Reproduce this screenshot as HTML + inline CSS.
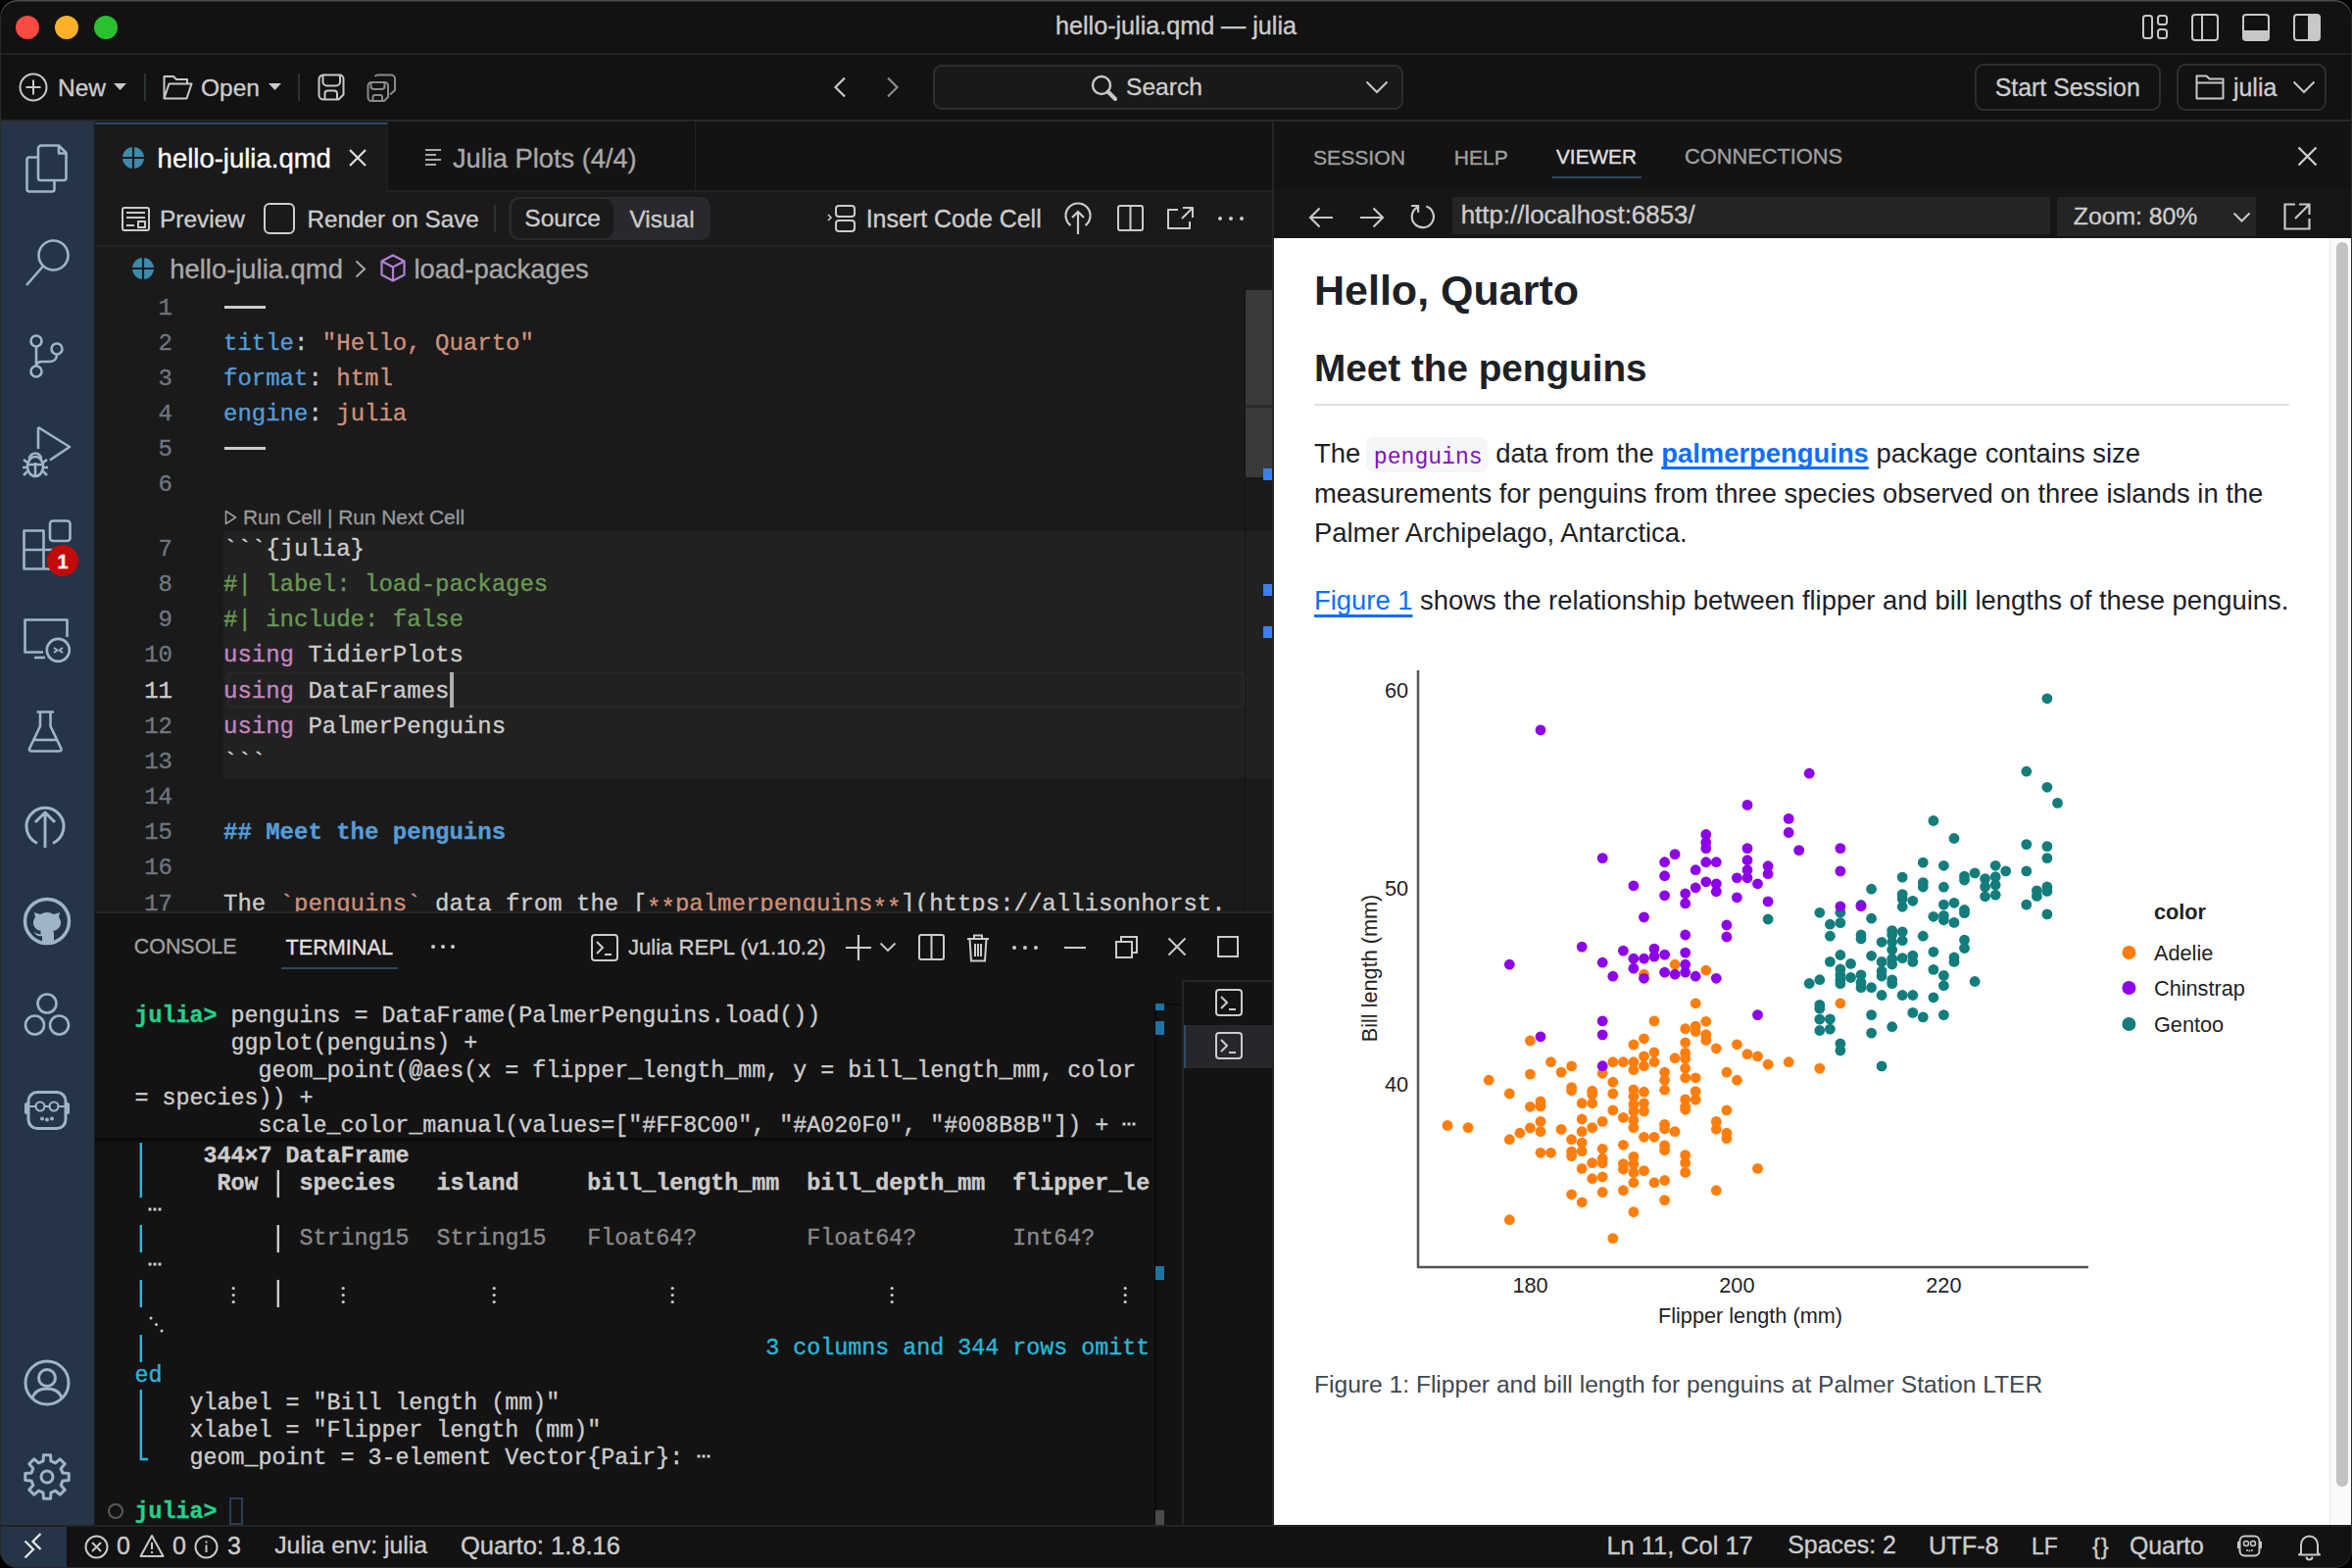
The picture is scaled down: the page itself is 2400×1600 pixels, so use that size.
<!DOCTYPE html>
<html><head><meta charset="utf-8">
<style>
*{margin:0;padding:0;box-sizing:border-box}
html,body{width:2400px;height:1600px;overflow:hidden;background:#000}
body{font-family:"Liberation Sans",sans-serif;color:#cccccc;position:relative}
.a{position:absolute}
svg{position:absolute;overflow:visible}
#win{position:absolute;left:0;top:0;width:2400px;height:1600px;background:#121212;border-radius:18px;overflow:hidden}
.t{position:absolute;white-space:pre;line-height:1;-webkit-text-stroke:0.35px currentColor}
.mono{font-family:"Liberation Mono",monospace}
.doc .t{-webkit-text-stroke:0}
</style></head>
<body>
<div id="win">
<div class="a" style="left:0px;top:0px;width:2400px;height:54px;background:#121212;"></div>
<div class="a" style="left:0px;top:54px;width:2400px;height:2px;background:#232323;"></div>
<div class="a" style="left:16px;top:16px;width:24px;height:24px;border-radius:50%;background:#fe4a44"></div>
<div class="a" style="left:56px;top:16px;width:24px;height:24px;border-radius:50%;background:#fdb02a"></div>
<div class="a" style="left:96px;top:16px;width:24px;height:24px;border-radius:50%;background:#2ac02f"></div>
<div class="t" style="left:600.0px;width:1200px;text-align:center;top:14.4px;font-size:25.15px;color:#cccccc;font-weight:normal;">hello-julia.qmd — julia</div>
<svg style="left:2186px;top:15px;" width="28" height="26" viewBox="0 0 28 26"><g fill="none" stroke="#c8c8c8" stroke-width="2"><rect x="1" y="1" width="9" height="23" rx="2.5"/><rect x="16" y="1" width="9" height="9" rx="2.5"/><rect x="16" y="15" width="9" height="9" rx="2.5"/></g></svg>
<svg style="left:2236px;top:14px;" width="28" height="28" viewBox="0 0 28 28"><g fill="none" stroke="#c8c8c8" stroke-width="2"><rect x="1" y="1" width="26" height="26" rx="3"/><path d="M11 1V27"/></g></svg>
<svg style="left:2288px;top:14px;" width="28" height="28" viewBox="0 0 28 28"><g fill="none" stroke="#c8c8c8" stroke-width="2"><rect x="1" y="1" width="26" height="26" rx="3"/></g><path d="M1 17H27V24a3 3 0 0 1-3 3H4a3 3 0 0 1-3-3Z" fill="#c8c8c8"/></svg>
<svg style="left:2340px;top:14px;" width="28" height="28" viewBox="0 0 28 28"><g fill="none" stroke="#c8c8c8" stroke-width="2"><rect x="1" y="1" width="26" height="26" rx="3"/></g><path d="M15 1H24a3 3 0 0 1 3 3V24a3 3 0 0 1-3 3H15Z" fill="#c8c8c8"/></svg>
<div class="a" style="left:0px;top:56px;width:2400px;height:66px;background:#121212;"></div>
<div class="a" style="left:0px;top:122px;width:2400px;height:3px;background:#282828;"></div>
<svg style="left:19px;top:74px;" width="30" height="30" viewBox="0 0 30 30"><g fill="none" stroke="#c8c8c8" stroke-width="2"><circle cx="15" cy="15" r="13.5"/><path d="M15 7.5V22.5M7.5 15H22.5"/></g></svg>
<div class="t" style="left:59.0px;top:77.5px;font-size:24.5px;color:#cccccc;font-weight:normal;">New</div>
<svg style="left:116px;top:85px;" width="13" height="8" viewBox="0 0 13 8"><path d="M0 0H13L6.5 7Z" fill="#c8c8c8"/></svg>
<div class="a" style="left:147px;top:75px;width:2px;height:28px;background:#2c3338;"></div>
<svg style="left:166px;top:76px;" width="31" height="26" viewBox="0 0 31 26"><path d="M1.5 24.5V2H11L14 5H25V9.5M1.5 24.5L6.5 9.5H29.5L24.5 24.5Z" fill="none" stroke="#c8c8c8" stroke-width="2" stroke-linejoin="round"/></svg>
<div class="t" style="left:205.0px;top:77.5px;font-size:24.5px;color:#cccccc;font-weight:normal;">Open</div>
<svg style="left:274px;top:85px;" width="13" height="8" viewBox="0 0 13 8"><path d="M0 0H13L6.5 7Z" fill="#c8c8c8"/></svg>
<div class="a" style="left:304px;top:75px;width:2px;height:28px;background:#2c3338;"></div>
<svg style="left:324px;top:75px;" width="28" height="28" viewBox="0 0 28 28"><g fill="none" stroke="#c8c8c8" stroke-width="2"><path d="M6 1.5H22.5A4 4 0 0 1 26.5 5.5V21.5L21.5 26.5H6A4.5 4.5 0 0 1 1.5 22V6A4.5 4.5 0 0 1 6 1.5Z"/><path d="M5.5 1.5V8.5A4 4 0 0 0 9.5 12.5H19A4 4 0 0 0 23 8.5V1.5"/><path d="M7.5 26V20.5A3 3 0 0 1 10.5 17.5H17A3 3 0 0 1 20 20.5V26"/></g></svg>
<svg style="left:374px;top:75px;" width="31" height="29" viewBox="0 0 31 29"><g fill="none" stroke="#8a8a8a" stroke-width="2"><path d="M5 9H18.5A3.5 3.5 0 0 1 22 12.5V24L18 28H5A3.5 3.5 0 0 1 1.5 24.5V12.5A3.5 3.5 0 0 1 5 9Z"/><path d="M4.5 9V13A3 3 0 0 0 7.5 16H15.5A3 3 0 0 0 18.5 13V9"/><path d="M6.5 27.5V24A2 2 0 0 1 8.5 22H14A2 2 0 0 1 16 24V27.5"/><path d="M8.5 3A4 4 0 0 1 12 1.5H25A4 4 0 0 1 29 5.5V17L24 21.5"/></g></svg>
<svg style="left:850px;top:78px;" width="14" height="22" viewBox="0 0 14 22"><path d="M12 1.5L2.5 11L12 20.5" fill="none" stroke="#c8c8c8" stroke-width="2.2"/></svg>
<svg style="left:904px;top:78px;" width="14" height="22" viewBox="0 0 14 22"><path d="M2 1.5L11.5 11L2 20.5" fill="none" stroke="#8a8a8a" stroke-width="2.2"/></svg>
<div class="a" style="left:952px;top:66px;width:480px;height:46px;border:2px solid #2e2e2e;border-radius:9px;background:#191919"></div>
<svg style="left:1113px;top:76px;" width="28" height="28" viewBox="0 0 28 28"><g fill="none" stroke="#c8c8c8"><circle cx="11" cy="11" r="9" stroke-width="2.4"/><path d="M17.5 17.5L25 25" stroke-width="4" stroke-linecap="round"/></g></svg>
<div class="t" style="left:1149.0px;top:77.4px;font-size:24.6px;color:#cccccc;font-weight:normal;">Search</div>
<svg style="left:1393px;top:82px;" width="24" height="14" viewBox="0 0 24 14"><path d="M1.5 1.5L12 12L22.5 1.5" fill="none" stroke="#c8c8c8" stroke-width="2"/></svg>
<div class="a" style="left:2015px;top:65px;width:190px;height:48px;border:2px solid #2e2e2e;border-radius:9px"></div>
<div class="t" style="left:2035.7px;top:77.1px;font-size:24.9px;color:#cccccc;font-weight:normal;">Start Session</div>
<div class="a" style="left:2221px;top:65px;width:153px;height:48px;border:2px solid #2e2e2e;border-radius:9px"></div>
<svg style="left:2240px;top:76px;" width="30" height="26" viewBox="0 0 30 26"><path d="M1.5 24.5V1.5H11.5L14.5 4.5H28.5V24.5ZM1.5 8.5H28.5" fill="none" stroke="#c8c8c8" stroke-width="2" stroke-linejoin="round"/></svg>
<div class="t" style="left:2279.0px;top:77.1px;font-size:24.9px;color:#cccccc;font-weight:normal;">julia</div>
<svg style="left:2339px;top:82px;" width="24" height="14" viewBox="0 0 24 14"><path d="M1.5 1.5L12 12L22.5 1.5" fill="none" stroke="#c8c8c8" stroke-width="2"/></svg>
<div class="a" style="left:0px;top:124px;width:96px;height:1432px;background:#253547;"></div>
<div class="a" style="left:96px;top:124px;width:1px;height:1432px;background:#161b20;"></div>
<svg style="left:24px;top:147px;" width="48" height="48" viewBox="0 0 48 48"><g fill="none" stroke="#a0b4c8" stroke-width="2.6" stroke-linejoin="round"><path d="M18 1.5H36L43.5 9V34.5A2.5 2.5 0 0 1 41 37H17.5A2.5 2.5 0 0 1 15 34.5V4.5A3 3 0 0 1 18 1.5Z"/><path d="M36 2V9.5H43"/><path d="M15 13.5H6A2.5 2.5 0 0 0 3.5 16V46A2.5 2.5 0 0 0 6 48.5H29A2.5 2.5 0 0 0 31.5 46V37.5"/></g></svg>
<svg style="left:24px;top:243px;" width="48" height="48" viewBox="0 0 48 48"><g fill="none" stroke="#a0b4c8" stroke-width="2.6" stroke-linejoin="round"><circle cx="30.5" cy="17.5" r="15"/><path d="M20.5 28L3 48"/></g></svg>
<svg style="left:24px;top:339px;" width="48" height="48" viewBox="0 0 48 48"><g fill="none" stroke="#a0b4c8" stroke-width="2.6" stroke-linejoin="round"><circle cx="13" cy="9" r="5.5"/><circle cx="13" cy="40" r="5.5"/><circle cx="34" cy="17" r="5.5"/><path d="M13 14.5V34.5"/><path d="M34 22.5C34 27 31.5 30 27 30H19C15.5 30 13 31.5 13 34.5"/></g></svg>
<svg style="left:24px;top:432px;" width="48" height="48" viewBox="0 0 48 48"><g fill="none" stroke="#a0b4c8" stroke-width="2.6" stroke-linejoin="round"><path d="M15 4V26M15 4L47 24L27 37.5"/><path d="M6 36.5a6 6 0 0 1 12 0"/><ellipse cx="12" cy="44" rx="8" ry="10"/><path d="M4 42H20M12 40V54M0 37l4 3M24 37l-4 3M-1 45H4M20 45H25M0 53l4-4M24 53l-4-4"/></g></svg>
<svg style="left:24px;top:531px;" width="48" height="48" viewBox="0 0 48 48"><g fill="none" stroke="#a0b4c8" stroke-width="2.6" stroke-linejoin="round"><path d="M0.5 10.5H20.5V30H40.5V49.5H0.5Z"/><path d="M0.5 30H20.5V49.5"/><rect x="27" y="0.5" width="20.5" height="20.5" rx="3"/></g></svg>
<div class="a" style="left:48px;top:556px;width:32px;height:32px;border-radius:50%;background:#c20a0a"></div>
<div class="t" style="left:-536.0px;width:1200px;text-align:center;top:563.1px;font-size:20px;color:#ffffff;font-weight:bold;">1</div>
<svg style="left:24px;top:630px;" width="48" height="48" viewBox="0 0 48 48"><g fill="none" stroke="#a0b4c8" stroke-width="2.6" stroke-linejoin="round"><path d="M44.5 20V2.5H1.5V35.5H20"/><path d="M11 41H22"/><circle cx="35.3" cy="33.4" r="11.5"/><path d="M31 36l3.5-2.5-3.5-2.5M40 31l-3.5 2.5 3.5 2.5" stroke-width="2"/></g></svg>
<svg style="left:24px;top:724px;" width="48" height="48" viewBox="0 0 48 48"><g fill="none" stroke="#a0b4c8" stroke-width="2.6" stroke-linejoin="round"><path d="M13.5 2.5H31M17 2.5V17L6 40a2 2 0 0 0 2 2.5H36.5a2 2 0 0 0 2-2.5L27.5 17V2.5"/><path d="M10.5 31H34"/></g></svg>
<svg style="left:24px;top:819px;" width="48" height="48" viewBox="0 0 48 48"><g fill="none" stroke="#a0b4c8" stroke-width="3" stroke-linejoin="round"><path d="M14 41.5A19 19 0 1 1 30 41.5"/><path d="M22 46V10M12 20L22 10L32 20"/></g></svg>
<svg style="left:24px;top:916px;" width="48" height="48" viewBox="0 0 48 48"><circle cx="24" cy="24" r="22.5" fill="none" stroke="#a0b4c8" stroke-width="3.5"/><path d="M19 47V39c-4 1-7-1-8-4 2 1 4 3 7 2-1-1-1-2 0-3-5-1-8-4-8-9 0-2 1-4 2-5l-1-5 6 2a14 14 0 0 1 14 0l6-2-1 5c1 1 2 3 2 5 0 5-3 8-8 9 1 1 1 2 1 4V47Z" fill="#a0b4c8"/></svg>
<svg style="left:24px;top:1012px;" width="48" height="48" viewBox="0 0 48 48"><g fill="none" stroke="#a0b4c8" stroke-width="2.6" stroke-linejoin="round"><circle cx="24" cy="12" r="9.5"/><circle cx="11.5" cy="34" r="9.5"/><circle cx="36.5" cy="34" r="9.5"/></g></svg>
<svg style="left:24px;top:1112px;" width="48" height="48" viewBox="0 0 48 48"><g fill="none" stroke="#a0b4c8" stroke-width="3" stroke-linejoin="round"><rect x="5" y="2.5" width="38" height="37" rx="9"/><circle cx="17" cy="17" r="4.5" stroke-width="2.2"/><circle cx="31" cy="17" r="4.5" stroke-width="2.2"/><path d="M21.5 17H26.5M5 17H12.5M35.5 17H43" stroke-width="2.2"/></g></svg>
<svg style="left:24px;top:1112px" width="48" height="48"><g fill="#a0b4c8"><rect x="1" y="13" width="4" height="12" rx="2"/><rect x="43" y="13" width="4" height="12" rx="2"/><circle cx="19" cy="29.5" r="2"/><circle cx="24" cy="30.5" r="2"/><circle cx="29" cy="29.5" r="2"/></g></svg>
<svg style="left:24px;top:1387px;" width="48" height="48" viewBox="0 0 48 48"><g fill="none" stroke="#a0b4c8" stroke-width="3" stroke-linejoin="round"><circle cx="24" cy="24" r="22"/><circle cx="24" cy="19" r="8.5"/><path d="M9 40c2-7 8-10 15-10s13 3 15 10"/></g></svg>
<svg style="left:24px;top:1483px;" width="48" height="48" viewBox="0 0 48 48"><g fill="none" stroke="#a0b4c8" stroke-width="3" stroke-linejoin="round"><path d="M40.03 20.08 L46.21 20.42 L46.21 27.58 L40.03 27.92 L38.11 32.56 L42.24 37.17 L37.17 42.24 L32.56 38.11 L27.92 40.03 L27.58 46.21 L20.42 46.21 L20.08 40.03 L15.44 38.11 L10.83 42.24 L5.76 37.17 L9.89 32.56 L7.97 27.92 L1.79 27.58 L1.79 20.42 L7.97 20.08 L9.89 15.44 L5.76 10.83 L10.83 5.76 L15.44 9.89 L20.08 7.97 L20.42 1.79 L27.58 1.79 L27.92 7.97 L32.56 9.89 L37.17 5.76 L42.24 10.83 L38.11 15.44Z"/><circle cx="24" cy="24" r="6"/></g></svg>
<div class="a" style="left:0px;top:1556px;width:2400px;height:44px;background:#121212;"></div>
<div class="a" style="left:0px;top:1556px;width:2400px;height:2px;background:#232323;"></div>
<div class="a" style="left:0px;top:1558px;width:68px;height:42px;background:#253547;"></div>
<svg style="left:20px;top:1560px;" width="30" height="34" viewBox="0 0 30 34"><path d="M5.5 12.5L14 21L5.5 29.5M21.5 5L13.5 13L21.5 21" fill="none" stroke="#e8e8e8" stroke-width="2.2"/></svg>
<svg style="left:86px;top:1566px;" width="25" height="25" viewBox="0 0 25 25"><g fill="none" stroke="#c8c8c8" stroke-width="2"><circle cx="12.5" cy="12.5" r="11"/><path d="M8 8L17 17M17 8L8 17"/></g></svg>
<div class="t" style="left:119.0px;top:1565.1px;font-size:25px;color:#cccccc;font-weight:normal;">0</div>
<svg style="left:142px;top:1565px;" width="26" height="25" viewBox="0 0 26 25"><g fill="none" stroke="#c8c8c8" stroke-width="2" stroke-linejoin="round"><path d="M13 2L24.5 23H1.5Z"/></g><path d="M12 9H14V16H12ZM12 18H14V20H12Z" fill="#c8c8c8"/></svg>
<div class="t" style="left:176.0px;top:1565.1px;font-size:25px;color:#cccccc;font-weight:normal;">0</div>
<svg style="left:198px;top:1566px;" width="25" height="25" viewBox="0 0 25 25"><g fill="none" stroke="#c8c8c8" stroke-width="2"><circle cx="12.5" cy="12.5" r="11"/></g><path d="M11.5 10.5H13.5V18H11.5ZM11.5 6.5H13.5V8.5H11.5Z" fill="#c8c8c8"/></svg>
<div class="t" style="left:232.0px;top:1565.1px;font-size:25px;color:#cccccc;font-weight:normal;">3</div>
<div class="t" style="left:280.2px;top:1565.3px;font-size:24.84px;color:#cccccc;font-weight:normal;">Julia env: julia</div>
<div class="t" style="left:469.9px;top:1564.7px;font-size:25.5px;color:#cccccc;font-weight:normal;">Quarto: 1.8.16</div>
<div class="t" style="left:1639.5px;top:1564.8px;font-size:25.4px;color:#cccccc;font-weight:normal;">Ln 11, Col 17</div>
<div class="t" style="left:1824.3px;top:1565.3px;font-size:24.85px;color:#cccccc;font-weight:normal;">Spaces: 2</div>
<div class="t" style="left:1968.0px;top:1564.9px;font-size:25.3px;color:#cccccc;font-weight:normal;">UTF-8</div>
<div class="t" style="left:2072.9px;top:1566.8px;font-size:23px;color:#cccccc;font-weight:normal;">LF</div>
<div class="t" style="left:2135.0px;top:1566.0px;font-size:24px;color:#cccccc;font-weight:normal;letter-spacing:-3px">{ }</div>
<div class="t" style="left:2172.9px;top:1565.3px;font-size:24.86px;color:#cccccc;font-weight:normal;">Quarto</div>
<svg style="left:2283px;top:1566px;" width="25" height="24" viewBox="0 0 25 24"><g fill="none" stroke="#c8c8c8" stroke-width="2"><rect x="2.5" y="1.5" width="20" height="20" rx="5"/><circle cx="9" cy="9" r="2.5" stroke-width="1.5"/><circle cx="16" cy="9" r="2.5" stroke-width="1.5"/></g><g fill="#c8c8c8"><rect x="0" y="7" width="2.5" height="7"/><rect x="22.5" y="7" width="2.5" height="7"/><circle cx="10" cy="16" r="1"/><circle cx="12.5" cy="16.5" r="1"/><circle cx="15" cy="16" r="1"/></g></svg>
<svg style="left:2345px;top:1565px;" width="23" height="26" viewBox="0 0 23 26"><g fill="none" stroke="#c8c8c8" stroke-width="2" stroke-linejoin="round"><path d="M3 19.5V11a8.5 8.5 0 0 1 17 0V19.5L22 21.5H1Z"/><path d="M8.5 23.5a3 3 0 0 0 6 0"/></g></svg>
<div class="a" style="left:97px;top:124px;width:1201px;height:807px;background:#1a1a1a;"></div>
<div class="a" style="left:395px;top:124px;width:903px;height:70px;background:#131313;"></div>
<div class="a" style="left:395px;top:194px;width:903px;height:2px;background:#232323;"></div>
<div class="a" style="left:395px;top:124px;width:1px;height:70px;background:#232323;"></div>
<div class="a" style="left:709px;top:124px;width:1px;height:70px;background:#232323;"></div>
<div class="a" style="left:97px;top:125px;width:298px;height:2px;background:#2d4a66;"></div>
<svg style="left:125px;top:150px" width="22" height="22"><circle cx="11" cy="11" r="11" fill="#3d8ab0"/><path d="M11 0V22M0 11H22" stroke="#1a1a1a" stroke-width="2.2"/></svg>
<div class="t" style="left:160.6px;top:147.7px;font-size:27.5px;color:#ffffff;font-weight:normal;">hello-julia.qmd</div>
<svg style="left:355px;top:151px;" width="20" height="20" viewBox="0 0 20 20"><path d="M2 2L18 18M18 2L2 18" stroke="#e0e0e0" stroke-width="2.2"/></svg>
<svg style="left:433px;top:151px;" width="20" height="18" viewBox="0 0 20 18"><path d="M1 2H17M1 7H12M1 12H17M1 17H12" stroke="#a8a8a8" stroke-width="2"/></svg>
<div class="t" style="left:462.0px;top:147.9px;font-size:27.24px;color:#a8a8a8;font-weight:normal;">Julia Plots (4/4)</div>
<div class="a" style="left:97px;top:250px;width:1201px;height:2px;background:#242424;"></div>
<svg style="left:124px;top:211px;" width="29" height="25" viewBox="0 0 29 25"><g fill="none" stroke="#cccccc" stroke-width="2"><rect x="1" y="1" width="27" height="23" rx="2"/><path d="M5 6H24M5 11H24M5 19H13" /><rect x="17" y="15" width="7" height="6"/></g></svg>
<div class="t" style="left:163.0px;top:211.5px;font-size:24.43px;color:#cccccc;font-weight:normal;">Preview</div>
<div class="a" style="left:269px;top:207px;width:32px;height:32px;border:2.2px solid #cfcfcf;border-radius:6px"></div>
<div class="t" style="left:313.6px;top:211.7px;font-size:24.24px;color:#cccccc;font-weight:normal;">Render on Save</div>
<div class="a" style="left:504px;top:209px;width:2px;height:28px;background:#2c3338;"></div>
<div class="a" style="left:519px;top:201px;width:206px;height:44px;background:#29292d;border-radius:10px"></div>
<div class="a" style="left:522px;top:203px;width:104px;height:40px;background:#1a1a1a;border-radius:9px"></div>
<div class="t" style="left:535.3px;top:211.4px;font-size:24.52px;color:#cccccc;font-weight:normal;">Source</div>
<div class="t" style="left:642.4px;top:211.5px;font-size:24.51px;color:#cccccc;font-weight:normal;">Visual</div>
<svg style="left:844px;top:208px;" width="30" height="30" viewBox="0 0 30 30"><g fill="none" stroke="#cccccc" stroke-width="2"><path d="M1 11L4 14L1 17" stroke-width="1.6"/><rect x="9" y="2" width="19" height="11" rx="3"/><rect x="9" y="17" width="19" height="11" rx="3"/></g></svg>
<div class="t" style="left:883.7px;top:211.1px;font-size:24.97px;color:#cccccc;font-weight:normal;">Insert Code Cell</div>
<svg style="left:1086px;top:207px;" width="28" height="33" viewBox="0 0 28 33"><g fill="none" stroke="#cccccc" stroke-width="2.2"><path d="M6.5 23A12.5 12.5 0 1 1 21.5 23"/><path d="M14 32V9M8 15L14 9L20 15"/></g></svg>
<svg style="left:1140px;top:209px;" width="27" height="27" viewBox="0 0 27 27"><g fill="none" stroke="#cccccc" stroke-width="2"><rect x="1" y="1" width="25" height="25" rx="2"/><path d="M13.5 1V26"/></g></svg>
<svg style="left:1191px;top:211px;" width="27" height="24" viewBox="0 0 27 24"><g fill="none" stroke="#cccccc" stroke-width="2" stroke-linejoin="round"><path d="M11 3H1V22H23V15"/><path d="M16 1H26V11M26 1L15 12"/></g></svg>
<div class="a" style="left:1242.8px;top:221px;width:4.4px;height:4.4px;border-radius:50%;background:#cccccc"></div>
<div class="a" style="left:1253.8px;top:221px;width:4.4px;height:4.4px;border-radius:50%;background:#cccccc"></div>
<div class="a" style="left:1264.8px;top:221px;width:4.4px;height:4.4px;border-radius:50%;background:#cccccc"></div>
<svg style="left:135px;top:263px" width="22" height="22"><circle cx="11" cy="11" r="11" fill="#3d8ab0"/><path d="M11 0V22M0 11H22" stroke="#1a1a1a" stroke-width="2.2"/></svg>
<div class="t" style="left:173.3px;top:260.9px;font-size:27.4px;color:#a8a8a8;font-weight:normal;">hello-julia.qmd</div>
<svg style="left:362px;top:265px;" width="12" height="19" viewBox="0 0 12 19"><path d="M1.5 1.5L10 9.5L1.5 17.5" fill="none" stroke="#a8a8a8" stroke-width="2"/></svg>
<svg style="left:388px;top:259px;" width="26" height="29" viewBox="0 0 26 29"><g fill="none" stroke="#b180d7" stroke-width="2.2" stroke-linejoin="round"><path d="M13 1.5L24.5 7.5V21.5L13 27.5L1.5 21.5V7.5Z"/><path d="M1.5 7.5L13 13.5L24.5 7.5M13 13.5V27.5"/></g></svg>
<div class="t" style="left:422.5px;top:260.9px;font-size:27.4px;color:#a8a8a8;font-weight:normal;">load-packages</div>
<div class="a" style="left:97px;top:252px;width:1201px;height:679px;overflow:hidden"><div class="a" style="left:-97px;top:-252px;width:1300px;height:931px">
<div class="a" style="left:228px;top:542px;width:1070px;height:252px;background:#212121;"></div>
<div class="a" style="left:232px;top:686px;width:1038px;height:36px;border:2px solid #282828"></div>
<div class="t mono" style="left:100px;width:76px;text-align:right;top:296.5px;line-height:36px;font-size:24px;color:#6e7681">1</div>
<div class="t mono" style="left:100px;width:76px;text-align:right;top:332.5px;line-height:36px;font-size:24px;color:#6e7681">2</div>
<div class="t mono" style="left:228px;top:332.5px;line-height:36px;font-size:24px"><span style="color:#569cd6">title</span><span style="color:#cccccc">: </span><span style="color:#ce9178">"Hello, Quarto"</span></div>
<div class="t mono" style="left:100px;width:76px;text-align:right;top:368.5px;line-height:36px;font-size:24px;color:#6e7681">3</div>
<div class="t mono" style="left:228px;top:368.5px;line-height:36px;font-size:24px"><span style="color:#569cd6">format</span><span style="color:#cccccc">: </span><span style="color:#ce9178">html</span></div>
<div class="t mono" style="left:100px;width:76px;text-align:right;top:404.5px;line-height:36px;font-size:24px;color:#6e7681">4</div>
<div class="t mono" style="left:228px;top:404.5px;line-height:36px;font-size:24px"><span style="color:#569cd6">engine</span><span style="color:#cccccc">: </span><span style="color:#ce9178">julia</span></div>
<div class="t mono" style="left:100px;width:76px;text-align:right;top:440.5px;line-height:36px;font-size:24px;color:#6e7681">5</div>
<div class="t mono" style="left:100px;width:76px;text-align:right;top:476.5px;line-height:36px;font-size:24px;color:#6e7681">6</div>
<div class="t mono" style="left:100px;width:76px;text-align:right;top:543.0px;line-height:36px;font-size:24px;color:#6e7681">7</div>
<div class="t mono" style="left:228px;top:543.0px;line-height:36px;font-size:24px"><span style="color:#cccccc">```{julia}</span></div>
<div class="t mono" style="left:100px;width:76px;text-align:right;top:579.15px;line-height:36px;font-size:24px;color:#6e7681">8</div>
<div class="t mono" style="left:228px;top:579.15px;line-height:36px;font-size:24px"><span style="color:#6a9955">#| label: load-packages</span></div>
<div class="t mono" style="left:100px;width:76px;text-align:right;top:615.3px;line-height:36px;font-size:24px;color:#6e7681">9</div>
<div class="t mono" style="left:228px;top:615.3px;line-height:36px;font-size:24px"><span style="color:#6a9955">#| include: false</span></div>
<div class="t mono" style="left:100px;width:76px;text-align:right;top:651.45px;line-height:36px;font-size:24px;color:#6e7681">10</div>
<div class="t mono" style="left:228px;top:651.45px;line-height:36px;font-size:24px"><span style="color:#c586c0">using</span><span style="color:#cccccc"> TidierPlots</span></div>
<div class="t mono" style="left:100px;width:76px;text-align:right;top:687.6px;line-height:36px;font-size:24px;color:#cccccc">11</div>
<div class="t mono" style="left:228px;top:687.6px;line-height:36px;font-size:24px"><span style="color:#c586c0">using</span><span style="color:#cccccc"> DataFrames</span></div>
<div class="t mono" style="left:100px;width:76px;text-align:right;top:723.75px;line-height:36px;font-size:24px;color:#6e7681">12</div>
<div class="t mono" style="left:228px;top:723.75px;line-height:36px;font-size:24px"><span style="color:#c586c0">using</span><span style="color:#cccccc"> PalmerPenguins</span></div>
<div class="t mono" style="left:100px;width:76px;text-align:right;top:759.9px;line-height:36px;font-size:24px;color:#6e7681">13</div>
<div class="t mono" style="left:228px;top:759.9px;line-height:36px;font-size:24px"><span style="color:#cccccc">```</span></div>
<div class="t mono" style="left:100px;width:76px;text-align:right;top:796.05px;line-height:36px;font-size:24px;color:#6e7681">14</div>
<div class="t mono" style="left:100px;width:76px;text-align:right;top:832.2px;line-height:36px;font-size:24px;color:#6e7681">15</div>
<div class="t mono" style="left:228px;top:832.2px;line-height:36px;font-size:24px"><span style="color:#569cd6;font-weight:bold">## Meet the penguins</span></div>
<div class="t mono" style="left:100px;width:76px;text-align:right;top:868.3499999999999px;line-height:36px;font-size:24px;color:#6e7681">16</div>
<div class="t mono" style="left:100px;width:76px;text-align:right;top:904.5px;line-height:36px;font-size:24px;color:#6e7681">17</div>
<div class="t mono" style="left:228px;top:904.5px;line-height:36px;font-size:24px"><span style="color:#cccccc">The </span><span style="color:#ce9178">`penguins`</span><span style="color:#cccccc"> data from the [</span><span style="color:#ce9178"><span style="position:relative;top:5px">**</span>palmerpenguins<span style="position:relative;top:5px">**</span></span><span style="color:#cccccc">](https://allisonhorst.</span></div>
<svg style="left:229px;top:520px;" width="13" height="16" viewBox="0 0 13 16"><path d="M1.5 1.5L11.5 8L1.5 14.5Z" fill="none" stroke="#999" stroke-width="1.6" stroke-linejoin="round"/></svg>
<div class="t" style="left:248.0px;top:517.8px;font-size:20.9px;color:#999999;font-weight:normal;">Run Cell | Run Next Cell</div>
<div class="a" style="left:459px;top:686px;width:4px;height:36px;background:#aeafad;"></div>
<div class="a" style="left:229px;top:312px;width:42px;height:3px;background:#cccccc;"></div>
<div class="a" style="left:229px;top:456px;width:42px;height:3px;background:#cccccc;"></div>
<div class="a" style="left:1270px;top:296px;width:1px;height:635px;background:#141414;"></div>
<div class="a" style="left:1271px;top:296px;width:27px;height:117px;background:#3a3a3a;"></div>
<div class="a" style="left:1271px;top:413px;width:27px;height:3px;background:#2a2a2a;"></div>
<div class="a" style="left:1271px;top:416px;width:27px;height:71px;background:#3a3a3a;"></div>
<div class="a" style="left:1289px;top:478px;width:9px;height:12px;background:#3a80f0;"></div>
<div class="a" style="left:1289px;top:596px;width:9px;height:12px;background:#3a80f0;"></div>
<div class="a" style="left:1289px;top:639px;width:9px;height:12px;background:#3a80f0;"></div>
</div></div>
<div class="a" style="left:1298px;top:124px;width:2px;height:1432px;background:#262626;"></div>
<div class="a" style="left:1300px;top:124px;width:1100px;height:69px;background:#131313;"></div>
<div class="t" style="left:1340.0px;top:149.7px;font-size:21.14px;color:#a0a0a0;font-weight:normal;">SESSION</div>
<div class="t" style="left:1483.7px;top:149.8px;font-size:21.05px;color:#a0a0a0;font-weight:normal;">HELP</div>
<div class="t" style="left:1588.0px;top:150.0px;font-size:20.79px;color:#e0e0e0;font-weight:normal;">VIEWER</div>
<div class="t" style="left:1719.0px;top:149.2px;font-size:21.79px;color:#a0a0a0;font-weight:normal;">CONNECTIONS</div>
<div class="a" style="left:1584px;top:180px;width:91px;height:2px;background:#2d4a63;"></div>
<svg style="left:2344px;top:149px;" width="21" height="21" viewBox="0 0 21 21"><path d="M1.5 1.5L19.5 19.5M19.5 1.5L1.5 19.5" stroke="#d0d0d0" stroke-width="2.2"/></svg>
<div class="a" style="left:1300px;top:193px;width:1100px;height:50px;background:#161616;"></div>
<svg style="left:1335px;top:211px;" width="26" height="22" viewBox="0 0 26 22"><path d="M25 11H2M11.5 1.5L2 11L11.5 20.5" fill="none" stroke="#c8c8c8" stroke-width="2.2"/></svg>
<svg style="left:1387px;top:211px;" width="26" height="22" viewBox="0 0 26 22"><path d="M1 11H24M14.5 1.5L24 11L14.5 20.5" fill="none" stroke="#c8c8c8" stroke-width="2.2"/></svg>
<svg style="left:1436px;top:205px;" width="32" height="32" viewBox="0 0 32 32"><g fill="none" stroke="#c8c8c8" stroke-width="2.2"><path d="M19.33 5.54A11.1 11.1 0 1 1 10.2 6.5"/><path d="M4.1 5H11.1V11.7"/></g></svg>
<div class="a" style="left:1482px;top:201px;width:610px;height:38px;background:#242424;"></div>
<div class="t" style="left:1490.7px;top:206.9px;font-size:25.9px;color:#cccccc;font-weight:normal;">http://localhost:6853/</div>
<div class="a" style="left:2099px;top:201px;width:203px;height:40px;background:#242424;"></div>
<div class="t" style="left:2115.8px;top:209.2px;font-size:24.74px;color:#cccccc;font-weight:normal;">Zoom: 80%</div>
<svg style="left:2278px;top:216px;" width="19" height="11" viewBox="0 0 19 11"><path d="M1.5 1.5L9.5 9.5L17.5 1.5" fill="none" stroke="#c8c8c8" stroke-width="2"/></svg>
<svg style="left:2330px;top:207px;" width="29" height="28" viewBox="0 0 29 28"><g fill="none" stroke="#c8c8c8" stroke-width="2.2"><path d="M12 1.5H1.5V26.5H26.5V16"/><path d="M16 1.5H26.5V12M26.5 1.5L12 16"/></g></svg>
<div class="a doc" style="left:1300px;top:243px;width:1077px;height:1313px;background:#fff;overflow:hidden">
<div class="t" style="left:41px;top:27px;font-size:43px;font-weight:bold;color:#1d2125;line-height:52px">Hello, Quarto</div>
<div class="t" style="left:41px;top:109px;font-size:38.7px;font-weight:bold;color:#1d2125;line-height:48px">Meet the penguins</div>
<div class="a" style="left:41px;top:169px;width:995px;height:2px;background:#dee2e6"></div>
<div class="a" style="left:94px;top:203px;width:124px;height:36px;background:#f5f6f7;border-radius:8px"></div>
<div class="t" style="left:41px;top:200px;font-size:27.4px;line-height:40px;color:#1d2125">The <span style="font-family:'Liberation Mono',monospace;font-size:23.1px;color:#7d12ba;position:relative;top:1px;margin:0 6px 0 6px">penguins</span> data from the <span style="color:#0d6efd;text-decoration:underline;text-decoration-thickness:2.5px;text-decoration-skip-ink:none;font-weight:bold;text-underline-offset:4px">palmerpenguins</span> package contains size</div>
<div class="t" style="left:41px;top:241px;font-size:27.4px;line-height:40px;color:#1d2125">measurements for penguins from three species observed on three islands in the</div>
<div class="t" style="left:41px;top:281px;font-size:27.4px;line-height:40px;color:#1d2125">Palmer Archipelago, Antarctica.</div>
<div class="t" style="left:41px;top:350px;font-size:27.4px;line-height:40.6px;color:#1d2125"><span style="color:#0d6efd;text-decoration:underline;text-decoration-thickness:2.5px;text-decoration-skip-ink:none;text-underline-offset:5px">Figure 1</span> shows the relationship between flipper and bill lengths of these penguins.</div>
<svg width="1077" height="1313" style="left:0;top:0">
<g stroke="#555" stroke-width="2.5" fill="none"><path d="M147 441 V1050 H831"/></g>
<g font-family="Liberation Sans" font-size="21.7" fill="#222">
<text x="137" y="469" text-anchor="end">60</text>
<text x="137" y="671" text-anchor="end">50</text>
<text x="137" y="871" text-anchor="end">40</text>
<text x="261.5" y="1076" text-anchor="middle">180</text>
<text x="472.4" y="1076" text-anchor="middle">200</text>
<text x="683.4" y="1076" text-anchor="middle">220</text>
<text x="486" y="1107" text-anchor="middle">Flipper length (mm)</text>
<text transform="translate(105 745) rotate(-90)" text-anchor="middle">Bill length (mm)</text>
<text x="898" y="695" font-weight="bold">color</text>
<text x="898" y="737">Adelie</text>
<text x="898" y="773">Chinstrap</text>
<text x="898" y="810">Gentoo</text>
</g>
<circle cx="872.4" cy="729" r="7" fill="#fd7e0e"/>
<circle cx="872.4" cy="765" r="7" fill="#8d00e8"/>
<circle cx="872.4" cy="802" r="7" fill="#127d7c"/>
<circle cx="409.1" cy="741.2" r="5.4" fill="#fd7e0e"/>
<circle cx="440.8" cy="747.2" r="5.4" fill="#fd7e0e"/>
<circle cx="377.5" cy="751.2" r="5.4" fill="#fd7e0e"/>
<circle cx="577.9" cy="780.8" r="5.4" fill="#fd7e0e"/>
<circle cx="261.4" cy="819.0" r="5.4" fill="#fd7e0e"/>
<circle cx="366.9" cy="823.0" r="5.4" fill="#fd7e0e"/>
<circle cx="282.5" cy="840.7" r="5.4" fill="#fd7e0e"/>
<circle cx="303.6" cy="844.9" r="5.4" fill="#fd7e0e"/>
<circle cx="293.1" cy="851.1" r="5.4" fill="#fd7e0e"/>
<circle cx="335.2" cy="852.3" r="5.4" fill="#fd7e0e"/>
<circle cx="345.8" cy="840.7" r="5.4" fill="#fd7e0e"/>
<circle cx="356.4" cy="840.7" r="5.4" fill="#fd7e0e"/>
<circle cx="366.9" cy="840.7" r="5.4" fill="#fd7e0e"/>
<circle cx="366.9" cy="848.7" r="5.4" fill="#fd7e0e"/>
<circle cx="261.4" cy="853.1" r="5.4" fill="#fd7e0e"/>
<circle cx="219.2" cy="859.2" r="5.4" fill="#fd7e0e"/>
<circle cx="345.8" cy="861.2" r="5.4" fill="#fd7e0e"/>
<circle cx="240.3" cy="873.0" r="5.4" fill="#fd7e0e"/>
<circle cx="303.6" cy="866.6" r="5.4" fill="#fd7e0e"/>
<circle cx="303.6" cy="869.8" r="5.4" fill="#fd7e0e"/>
<circle cx="324.7" cy="870.2" r="5.4" fill="#fd7e0e"/>
<circle cx="324.7" cy="873.8" r="5.4" fill="#fd7e0e"/>
<circle cx="345.8" cy="873.0" r="5.4" fill="#fd7e0e"/>
<circle cx="366.9" cy="868.8" r="5.4" fill="#fd7e0e"/>
<circle cx="366.9" cy="875.9" r="5.4" fill="#fd7e0e"/>
<circle cx="272.0" cy="880.9" r="5.4" fill="#fd7e0e"/>
<circle cx="272.0" cy="885.9" r="5.4" fill="#fd7e0e"/>
<circle cx="261.4" cy="886.3" r="5.4" fill="#fd7e0e"/>
<circle cx="314.2" cy="882.7" r="5.4" fill="#fd7e0e"/>
<circle cx="324.7" cy="882.7" r="5.4" fill="#fd7e0e"/>
<circle cx="430.2" cy="780.8" r="5.4" fill="#fd7e0e"/>
<circle cx="388.0" cy="798.9" r="5.4" fill="#fd7e0e"/>
<circle cx="419.7" cy="806.7" r="5.4" fill="#fd7e0e"/>
<circle cx="430.2" cy="804.1" r="5.4" fill="#fd7e0e"/>
<circle cx="430.2" cy="809.5" r="5.4" fill="#fd7e0e"/>
<circle cx="440.8" cy="799.3" r="5.4" fill="#fd7e0e"/>
<circle cx="440.8" cy="812.7" r="5.4" fill="#fd7e0e"/>
<circle cx="440.8" cy="818.4" r="5.4" fill="#fd7e0e"/>
<circle cx="377.5" cy="816.8" r="5.4" fill="#fd7e0e"/>
<circle cx="419.7" cy="820.8" r="5.4" fill="#fd7e0e"/>
<circle cx="451.3" cy="826.8" r="5.4" fill="#fd7e0e"/>
<circle cx="472.4" cy="822.8" r="5.4" fill="#fd7e0e"/>
<circle cx="483.0" cy="832.6" r="5.4" fill="#fd7e0e"/>
<circle cx="493.5" cy="834.9" r="5.4" fill="#fd7e0e"/>
<circle cx="504.1" cy="843.1" r="5.4" fill="#fd7e0e"/>
<circle cx="525.2" cy="840.7" r="5.4" fill="#fd7e0e"/>
<circle cx="556.8" cy="847.1" r="5.4" fill="#fd7e0e"/>
<circle cx="388.0" cy="830.8" r="5.4" fill="#fd7e0e"/>
<circle cx="388.0" cy="840.7" r="5.4" fill="#fd7e0e"/>
<circle cx="377.5" cy="834.9" r="5.4" fill="#fd7e0e"/>
<circle cx="377.5" cy="844.7" r="5.4" fill="#fd7e0e"/>
<circle cx="409.1" cy="836.7" r="5.4" fill="#fd7e0e"/>
<circle cx="419.7" cy="831.4" r="5.4" fill="#fd7e0e"/>
<circle cx="419.7" cy="837.3" r="5.4" fill="#fd7e0e"/>
<circle cx="419.7" cy="847.1" r="5.4" fill="#fd7e0e"/>
<circle cx="419.7" cy="856.8" r="5.4" fill="#fd7e0e"/>
<circle cx="398.6" cy="851.1" r="5.4" fill="#fd7e0e"/>
<circle cx="398.6" cy="859.2" r="5.4" fill="#fd7e0e"/>
<circle cx="398.6" cy="869.2" r="5.4" fill="#fd7e0e"/>
<circle cx="430.2" cy="856.8" r="5.4" fill="#fd7e0e"/>
<circle cx="461.9" cy="851.1" r="5.4" fill="#fd7e0e"/>
<circle cx="472.4" cy="859.2" r="5.4" fill="#fd7e0e"/>
<circle cx="377.5" cy="871.2" r="5.4" fill="#fd7e0e"/>
<circle cx="430.2" cy="870.6" r="5.4" fill="#fd7e0e"/>
<circle cx="430.2" cy="879.1" r="5.4" fill="#fd7e0e"/>
<circle cx="419.7" cy="878.9" r="5.4" fill="#fd7e0e"/>
<circle cx="419.7" cy="886.3" r="5.4" fill="#fd7e0e"/>
<circle cx="377.5" cy="882.7" r="5.4" fill="#fd7e0e"/>
<circle cx="177.0" cy="905.4" r="5.4" fill="#fd7e0e"/>
<circle cx="198.1" cy="907.6" r="5.4" fill="#fd7e0e"/>
<circle cx="240.3" cy="919.7" r="5.4" fill="#fd7e0e"/>
<circle cx="250.9" cy="913.2" r="5.4" fill="#fd7e0e"/>
<circle cx="261.4" cy="908.0" r="5.4" fill="#fd7e0e"/>
<circle cx="272.0" cy="901.4" r="5.4" fill="#fd7e0e"/>
<circle cx="272.0" cy="911.6" r="5.4" fill="#fd7e0e"/>
<circle cx="293.1" cy="909.4" r="5.4" fill="#fd7e0e"/>
<circle cx="303.6" cy="919.7" r="5.4" fill="#fd7e0e"/>
<circle cx="303.6" cy="932.1" r="5.4" fill="#fd7e0e"/>
<circle cx="303.6" cy="936.6" r="5.4" fill="#fd7e0e"/>
<circle cx="314.2" cy="899.0" r="5.4" fill="#fd7e0e"/>
<circle cx="314.2" cy="911.6" r="5.4" fill="#fd7e0e"/>
<circle cx="314.2" cy="923.1" r="5.4" fill="#fd7e0e"/>
<circle cx="314.2" cy="931.7" r="5.4" fill="#fd7e0e"/>
<circle cx="314.2" cy="949.4" r="5.4" fill="#fd7e0e"/>
<circle cx="324.7" cy="907.6" r="5.4" fill="#fd7e0e"/>
<circle cx="324.7" cy="943.6" r="5.4" fill="#fd7e0e"/>
<circle cx="324.7" cy="959.7" r="5.4" fill="#fd7e0e"/>
<circle cx="335.2" cy="901.4" r="5.4" fill="#fd7e0e"/>
<circle cx="335.2" cy="929.3" r="5.4" fill="#fd7e0e"/>
<circle cx="335.2" cy="939.2" r="5.4" fill="#fd7e0e"/>
<circle cx="335.2" cy="943.8" r="5.4" fill="#fd7e0e"/>
<circle cx="335.2" cy="957.9" r="5.4" fill="#fd7e0e"/>
<circle cx="335.2" cy="973.5" r="5.4" fill="#fd7e0e"/>
<circle cx="356.4" cy="897.4" r="5.4" fill="#fd7e0e"/>
<circle cx="356.4" cy="925.3" r="5.4" fill="#fd7e0e"/>
<circle cx="356.4" cy="944.6" r="5.4" fill="#fd7e0e"/>
<circle cx="356.4" cy="950.0" r="5.4" fill="#fd7e0e"/>
<circle cx="356.4" cy="971.7" r="5.4" fill="#fd7e0e"/>
<circle cx="272.0" cy="933.3" r="5.4" fill="#fd7e0e"/>
<circle cx="282.5" cy="933.3" r="5.4" fill="#fd7e0e"/>
<circle cx="303.6" cy="975.8" r="5.4" fill="#fd7e0e"/>
<circle cx="314.2" cy="983.8" r="5.4" fill="#fd7e0e"/>
<circle cx="240.3" cy="1001.7" r="5.4" fill="#fd7e0e"/>
<circle cx="345.8" cy="1020.6" r="5.4" fill="#fd7e0e"/>
<circle cx="345.8" cy="889.9" r="5.4" fill="#fd7e0e"/>
<circle cx="366.9" cy="883.9" r="5.4" fill="#fd7e0e"/>
<circle cx="366.9" cy="890.9" r="5.4" fill="#fd7e0e"/>
<circle cx="366.9" cy="900.0" r="5.4" fill="#fd7e0e"/>
<circle cx="366.9" cy="907.6" r="5.4" fill="#fd7e0e"/>
<circle cx="377.5" cy="890.9" r="5.4" fill="#fd7e0e"/>
<circle cx="398.6" cy="904.4" r="5.4" fill="#fd7e0e"/>
<circle cx="398.6" cy="908.8" r="5.4" fill="#fd7e0e"/>
<circle cx="409.1" cy="911.6" r="5.4" fill="#fd7e0e"/>
<circle cx="377.5" cy="917.3" r="5.4" fill="#fd7e0e"/>
<circle cx="388.0" cy="917.3" r="5.4" fill="#fd7e0e"/>
<circle cx="398.6" cy="925.9" r="5.4" fill="#fd7e0e"/>
<circle cx="398.6" cy="930.7" r="5.4" fill="#fd7e0e"/>
<circle cx="419.7" cy="935.6" r="5.4" fill="#fd7e0e"/>
<circle cx="419.7" cy="943.6" r="5.4" fill="#fd7e0e"/>
<circle cx="419.7" cy="953.4" r="5.4" fill="#fd7e0e"/>
<circle cx="451.3" cy="901.4" r="5.4" fill="#fd7e0e"/>
<circle cx="451.3" cy="909.2" r="5.4" fill="#fd7e0e"/>
<circle cx="461.9" cy="889.9" r="5.4" fill="#fd7e0e"/>
<circle cx="461.9" cy="913.2" r="5.4" fill="#fd7e0e"/>
<circle cx="461.9" cy="918.7" r="5.4" fill="#fd7e0e"/>
<circle cx="366.9" cy="937.4" r="5.4" fill="#fd7e0e"/>
<circle cx="366.9" cy="944.6" r="5.4" fill="#fd7e0e"/>
<circle cx="366.9" cy="953.4" r="5.4" fill="#fd7e0e"/>
<circle cx="377.5" cy="951.6" r="5.4" fill="#fd7e0e"/>
<circle cx="366.9" cy="963.7" r="5.4" fill="#fd7e0e"/>
<circle cx="388.0" cy="963.7" r="5.4" fill="#fd7e0e"/>
<circle cx="398.6" cy="961.5" r="5.4" fill="#fd7e0e"/>
<circle cx="451.3" cy="971.7" r="5.4" fill="#fd7e0e"/>
<circle cx="398.6" cy="981.6" r="5.4" fill="#fd7e0e"/>
<circle cx="366.9" cy="993.6" r="5.4" fill="#fd7e0e"/>
<circle cx="493.5" cy="949.4" r="5.4" fill="#fd7e0e"/>
<circle cx="419.7" cy="889.3" r="5.4" fill="#fd7e0e"/>
<circle cx="504.1" cy="695.0" r="5.4" fill="#127d7c"/>
<circle cx="788.9" cy="469.8" r="5.4" fill="#127d7c"/>
<circle cx="767.8" cy="544.2" r="5.4" fill="#127d7c"/>
<circle cx="788.9" cy="560.3" r="5.4" fill="#127d7c"/>
<circle cx="799.5" cy="576.4" r="5.4" fill="#127d7c"/>
<circle cx="672.9" cy="594.5" r="5.4" fill="#127d7c"/>
<circle cx="694.0" cy="612.5" r="5.4" fill="#127d7c"/>
<circle cx="767.8" cy="618.6" r="5.4" fill="#127d7c"/>
<circle cx="788.9" cy="620.6" r="5.4" fill="#127d7c"/>
<circle cx="788.9" cy="632.6" r="5.4" fill="#127d7c"/>
<circle cx="546.2" cy="760.5" r="5.4" fill="#127d7c"/>
<circle cx="556.8" cy="688.3" r="5.4" fill="#127d7c"/>
<circle cx="556.8" cy="756.7" r="5.4" fill="#127d7c"/>
<circle cx="556.8" cy="782.4" r="5.4" fill="#127d7c"/>
<circle cx="556.8" cy="786.2" r="5.4" fill="#127d7c"/>
<circle cx="556.8" cy="797.1" r="5.4" fill="#127d7c"/>
<circle cx="556.8" cy="808.5" r="5.4" fill="#127d7c"/>
<circle cx="567.4" cy="700.2" r="5.4" fill="#127d7c"/>
<circle cx="567.4" cy="712.2" r="5.4" fill="#127d7c"/>
<circle cx="567.4" cy="738.4" r="5.4" fill="#127d7c"/>
<circle cx="567.4" cy="796.9" r="5.4" fill="#127d7c"/>
<circle cx="567.4" cy="807.1" r="5.4" fill="#127d7c"/>
<circle cx="577.9" cy="688.3" r="5.4" fill="#127d7c"/>
<circle cx="577.9" cy="698.6" r="5.4" fill="#127d7c"/>
<circle cx="577.9" cy="731.5" r="5.4" fill="#127d7c"/>
<circle cx="577.9" cy="746.0" r="5.4" fill="#127d7c"/>
<circle cx="577.9" cy="751.8" r="5.4" fill="#127d7c"/>
<circle cx="577.9" cy="756.9" r="5.4" fill="#127d7c"/>
<circle cx="577.9" cy="760.7" r="5.4" fill="#127d7c"/>
<circle cx="577.9" cy="822.0" r="5.4" fill="#127d7c"/>
<circle cx="577.9" cy="829.0" r="5.4" fill="#127d7c"/>
<circle cx="588.5" cy="740.4" r="5.4" fill="#127d7c"/>
<circle cx="588.5" cy="754.5" r="5.4" fill="#127d7c"/>
<circle cx="599.0" cy="680.5" r="5.4" fill="#127d7c"/>
<circle cx="599.0" cy="711.0" r="5.4" fill="#127d7c"/>
<circle cx="599.0" cy="714.9" r="5.4" fill="#127d7c"/>
<circle cx="599.0" cy="751.8" r="5.4" fill="#127d7c"/>
<circle cx="599.0" cy="759.5" r="5.4" fill="#127d7c"/>
<circle cx="599.0" cy="764.7" r="5.4" fill="#127d7c"/>
<circle cx="609.6" cy="664.2" r="5.4" fill="#127d7c"/>
<circle cx="609.6" cy="694.2" r="5.4" fill="#127d7c"/>
<circle cx="609.6" cy="732.3" r="5.4" fill="#127d7c"/>
<circle cx="609.6" cy="764.7" r="5.4" fill="#127d7c"/>
<circle cx="609.6" cy="792.6" r="5.4" fill="#127d7c"/>
<circle cx="609.6" cy="811.1" r="5.4" fill="#127d7c"/>
<circle cx="620.1" cy="718.3" r="5.4" fill="#127d7c"/>
<circle cx="620.1" cy="738.4" r="5.4" fill="#127d7c"/>
<circle cx="620.1" cy="748.0" r="5.4" fill="#127d7c"/>
<circle cx="620.1" cy="753.0" r="5.4" fill="#127d7c"/>
<circle cx="620.1" cy="772.5" r="5.4" fill="#127d7c"/>
<circle cx="620.1" cy="844.9" r="5.4" fill="#127d7c"/>
<circle cx="630.7" cy="706.6" r="5.4" fill="#127d7c"/>
<circle cx="630.7" cy="711.0" r="5.4" fill="#127d7c"/>
<circle cx="630.7" cy="718.3" r="5.4" fill="#127d7c"/>
<circle cx="630.7" cy="726.3" r="5.4" fill="#127d7c"/>
<circle cx="630.7" cy="735.4" r="5.4" fill="#127d7c"/>
<circle cx="630.7" cy="741.0" r="5.4" fill="#127d7c"/>
<circle cx="630.7" cy="756.9" r="5.4" fill="#127d7c"/>
<circle cx="630.7" cy="760.7" r="5.4" fill="#127d7c"/>
<circle cx="630.7" cy="804.7" r="5.4" fill="#127d7c"/>
<circle cx="641.2" cy="652.1" r="5.4" fill="#127d7c"/>
<circle cx="641.2" cy="669.6" r="5.4" fill="#127d7c"/>
<circle cx="641.2" cy="674.1" r="5.4" fill="#127d7c"/>
<circle cx="641.2" cy="682.3" r="5.4" fill="#127d7c"/>
<circle cx="641.2" cy="707.8" r="5.4" fill="#127d7c"/>
<circle cx="641.2" cy="716.7" r="5.4" fill="#127d7c"/>
<circle cx="641.2" cy="734.6" r="5.4" fill="#127d7c"/>
<circle cx="641.2" cy="772.5" r="5.4" fill="#127d7c"/>
<circle cx="651.8" cy="676.3" r="5.4" fill="#127d7c"/>
<circle cx="651.8" cy="732.1" r="5.4" fill="#127d7c"/>
<circle cx="651.8" cy="738.4" r="5.4" fill="#127d7c"/>
<circle cx="651.8" cy="772.5" r="5.4" fill="#127d7c"/>
<circle cx="651.8" cy="790.4" r="5.4" fill="#127d7c"/>
<circle cx="662.3" cy="637.1" r="5.4" fill="#127d7c"/>
<circle cx="662.3" cy="657.6" r="5.4" fill="#127d7c"/>
<circle cx="662.3" cy="662.0" r="5.4" fill="#127d7c"/>
<circle cx="662.3" cy="712.2" r="5.4" fill="#127d7c"/>
<circle cx="662.3" cy="794.9" r="5.4" fill="#127d7c"/>
<circle cx="672.9" cy="692.3" r="5.4" fill="#127d7c"/>
<circle cx="672.9" cy="728.3" r="5.4" fill="#127d7c"/>
<circle cx="672.9" cy="746.4" r="5.4" fill="#127d7c"/>
<circle cx="672.9" cy="774.8" r="5.4" fill="#127d7c"/>
<circle cx="683.4" cy="640.3" r="5.4" fill="#127d7c"/>
<circle cx="683.4" cy="662.2" r="5.4" fill="#127d7c"/>
<circle cx="683.4" cy="680.1" r="5.4" fill="#127d7c"/>
<circle cx="683.4" cy="691.3" r="5.4" fill="#127d7c"/>
<circle cx="683.4" cy="695.8" r="5.4" fill="#127d7c"/>
<circle cx="683.4" cy="752.4" r="5.4" fill="#127d7c"/>
<circle cx="683.4" cy="762.7" r="5.4" fill="#127d7c"/>
<circle cx="683.4" cy="792.6" r="5.4" fill="#127d7c"/>
<circle cx="694.0" cy="678.3" r="5.4" fill="#127d7c"/>
<circle cx="694.0" cy="698.4" r="5.4" fill="#127d7c"/>
<circle cx="694.0" cy="734.0" r="5.4" fill="#127d7c"/>
<circle cx="694.0" cy="738.4" r="5.4" fill="#127d7c"/>
<circle cx="704.5" cy="651.1" r="5.4" fill="#127d7c"/>
<circle cx="704.5" cy="655.0" r="5.4" fill="#127d7c"/>
<circle cx="704.5" cy="685.5" r="5.4" fill="#127d7c"/>
<circle cx="704.5" cy="688.7" r="5.4" fill="#127d7c"/>
<circle cx="704.5" cy="716.1" r="5.4" fill="#127d7c"/>
<circle cx="704.5" cy="724.5" r="5.4" fill="#127d7c"/>
<circle cx="715.1" cy="647.9" r="5.4" fill="#127d7c"/>
<circle cx="715.1" cy="758.5" r="5.4" fill="#127d7c"/>
<circle cx="725.6" cy="653.6" r="5.4" fill="#127d7c"/>
<circle cx="725.6" cy="662.0" r="5.4" fill="#127d7c"/>
<circle cx="725.6" cy="671.8" r="5.4" fill="#127d7c"/>
<circle cx="736.2" cy="640.3" r="5.4" fill="#127d7c"/>
<circle cx="736.2" cy="651.7" r="5.4" fill="#127d7c"/>
<circle cx="736.2" cy="660.0" r="5.4" fill="#127d7c"/>
<circle cx="736.2" cy="670.2" r="5.4" fill="#127d7c"/>
<circle cx="746.7" cy="645.9" r="5.4" fill="#127d7c"/>
<circle cx="767.8" cy="645.9" r="5.4" fill="#127d7c"/>
<circle cx="767.8" cy="680.1" r="5.4" fill="#127d7c"/>
<circle cx="778.4" cy="665.8" r="5.4" fill="#127d7c"/>
<circle cx="778.4" cy="671.4" r="5.4" fill="#127d7c"/>
<circle cx="788.9" cy="662.0" r="5.4" fill="#127d7c"/>
<circle cx="788.9" cy="666.4" r="5.4" fill="#127d7c"/>
<circle cx="788.9" cy="689.9" r="5.4" fill="#127d7c"/>
<circle cx="272.0" cy="502.0" r="5.4" fill="#8d00e8"/>
<circle cx="483.0" cy="578.4" r="5.4" fill="#8d00e8"/>
<circle cx="525.2" cy="592.4" r="5.4" fill="#8d00e8"/>
<circle cx="525.2" cy="606.5" r="5.4" fill="#8d00e8"/>
<circle cx="535.7" cy="624.6" r="5.4" fill="#8d00e8"/>
<circle cx="440.8" cy="608.5" r="5.4" fill="#8d00e8"/>
<circle cx="440.8" cy="616.6" r="5.4" fill="#8d00e8"/>
<circle cx="440.8" cy="622.6" r="5.4" fill="#8d00e8"/>
<circle cx="409.1" cy="628.6" r="5.4" fill="#8d00e8"/>
<circle cx="335.2" cy="632.6" r="5.4" fill="#8d00e8"/>
<circle cx="398.6" cy="636.7" r="5.4" fill="#8d00e8"/>
<circle cx="440.8" cy="636.7" r="5.4" fill="#8d00e8"/>
<circle cx="451.3" cy="636.7" r="5.4" fill="#8d00e8"/>
<circle cx="483.0" cy="622.6" r="5.4" fill="#8d00e8"/>
<circle cx="483.0" cy="634.7" r="5.4" fill="#8d00e8"/>
<circle cx="430.2" cy="644.7" r="5.4" fill="#8d00e8"/>
<circle cx="504.1" cy="640.7" r="5.4" fill="#8d00e8"/>
<circle cx="504.1" cy="648.7" r="5.4" fill="#8d00e8"/>
<circle cx="483.0" cy="644.7" r="5.4" fill="#8d00e8"/>
<circle cx="483.0" cy="652.8" r="5.4" fill="#8d00e8"/>
<circle cx="472.4" cy="652.8" r="5.4" fill="#8d00e8"/>
<circle cx="493.5" cy="658.8" r="5.4" fill="#8d00e8"/>
<circle cx="398.6" cy="650.7" r="5.4" fill="#8d00e8"/>
<circle cx="440.8" cy="656.8" r="5.4" fill="#8d00e8"/>
<circle cx="451.3" cy="658.8" r="5.4" fill="#8d00e8"/>
<circle cx="451.3" cy="666.8" r="5.4" fill="#8d00e8"/>
<circle cx="430.2" cy="662.8" r="5.4" fill="#8d00e8"/>
<circle cx="366.9" cy="660.8" r="5.4" fill="#8d00e8"/>
<circle cx="398.6" cy="670.8" r="5.4" fill="#8d00e8"/>
<circle cx="419.7" cy="668.8" r="5.4" fill="#8d00e8"/>
<circle cx="419.7" cy="678.9" r="5.4" fill="#8d00e8"/>
<circle cx="472.4" cy="672.8" r="5.4" fill="#8d00e8"/>
<circle cx="504.1" cy="676.9" r="5.4" fill="#8d00e8"/>
<circle cx="377.5" cy="692.9" r="5.4" fill="#8d00e8"/>
<circle cx="461.9" cy="701.0" r="5.4" fill="#8d00e8"/>
<circle cx="461.9" cy="713.0" r="5.4" fill="#8d00e8"/>
<circle cx="419.7" cy="711.0" r="5.4" fill="#8d00e8"/>
<circle cx="314.2" cy="723.1" r="5.4" fill="#8d00e8"/>
<circle cx="356.4" cy="727.1" r="5.4" fill="#8d00e8"/>
<circle cx="335.2" cy="739.2" r="5.4" fill="#8d00e8"/>
<circle cx="388.0" cy="725.1" r="5.4" fill="#8d00e8"/>
<circle cx="388.0" cy="733.1" r="5.4" fill="#8d00e8"/>
<circle cx="366.9" cy="735.2" r="5.4" fill="#8d00e8"/>
<circle cx="377.5" cy="735.2" r="5.4" fill="#8d00e8"/>
<circle cx="398.6" cy="731.1" r="5.4" fill="#8d00e8"/>
<circle cx="419.7" cy="729.1" r="5.4" fill="#8d00e8"/>
<circle cx="366.9" cy="745.2" r="5.4" fill="#8d00e8"/>
<circle cx="419.7" cy="741.2" r="5.4" fill="#8d00e8"/>
<circle cx="419.7" cy="749.2" r="5.4" fill="#8d00e8"/>
<circle cx="398.6" cy="749.2" r="5.4" fill="#8d00e8"/>
<circle cx="409.1" cy="751.2" r="5.4" fill="#8d00e8"/>
<circle cx="430.2" cy="753.2" r="5.4" fill="#8d00e8"/>
<circle cx="345.8" cy="753.2" r="5.4" fill="#8d00e8"/>
<circle cx="451.3" cy="755.3" r="5.4" fill="#8d00e8"/>
<circle cx="240.3" cy="741.2" r="5.4" fill="#8d00e8"/>
<circle cx="377.5" cy="755.3" r="5.4" fill="#8d00e8"/>
<circle cx="546.2" cy="546.2" r="5.4" fill="#8d00e8"/>
<circle cx="577.9" cy="622.6" r="5.4" fill="#8d00e8"/>
<circle cx="577.9" cy="645.9" r="5.4" fill="#8d00e8"/>
<circle cx="577.9" cy="681.9" r="5.4" fill="#8d00e8"/>
<circle cx="599.0" cy="681.7" r="5.4" fill="#8d00e8"/>
<circle cx="335.2" cy="798.9" r="5.4" fill="#8d00e8"/>
<circle cx="335.2" cy="812.9" r="5.4" fill="#8d00e8"/>
<circle cx="272.0" cy="814.8" r="5.4" fill="#8d00e8"/>
<circle cx="335.2" cy="844.7" r="5.4" fill="#8d00e8"/>
<circle cx="493.5" cy="792.6" r="5.4" fill="#8d00e8"/>
</svg>
<div class="t" style="left:41px;top:1154.5px;font-size:24.6px;line-height:30px;color:#3e4750">Figure 1: Flipper and bill length for penguins at Palmer Station LTER</div>
</div>
<div class="a" style="left:2377px;top:243px;width:23px;height:1313px;background:#fafafa;border-left:1px solid #e6e6e6"></div>
<div class="a" style="left:2384px;top:247px;width:12px;height:1270px;background:#c2c2c2;border-radius:6px"></div>
<div class="a" style="left:97px;top:930px;width:1201px;height:626px;background:#131313;"></div>
<div class="a" style="left:97px;top:930px;width:1201px;height:2px;background:#262626;"></div>
<div class="t" style="left:136.8px;top:956.3px;font-size:21.41px;color:#a0a0a0;font-weight:normal;">CONSOLE</div>
<div class="t" style="left:291.6px;top:956.1px;font-size:21.64px;color:#e0e0e0;font-weight:normal;">TERMINAL</div>
<div class="a" style="left:287px;top:987px;width:119px;height:2px;background:#2d4a63;"></div>
<div class="a" style="left:440px;top:964px;width:4px;height:4px;border-radius:50%;background:#cccccc"></div>
<div class="a" style="left:450px;top:964px;width:4px;height:4px;border-radius:50%;background:#cccccc"></div>
<div class="a" style="left:460px;top:964px;width:4px;height:4px;border-radius:50%;background:#cccccc"></div>
<svg style="left:603px;top:953px;" width="28" height="28" viewBox="0 0 28 28"><g fill="none" stroke="#cccccc" stroke-width="2"><rect x="1" y="1" width="26" height="26" rx="3"/><path d="M6 8L12 14L6 20M14 21H21"/></g></svg>
<div class="t" style="left:641.0px;top:955.7px;font-size:22.07px;color:#cccccc;font-weight:normal;">Julia REPL (v1.10.2)</div>
<svg style="left:862px;top:953px;" width="28" height="28" viewBox="0 0 28 28"><path d="M14 1V27M1 14H27" stroke="#cccccc" stroke-width="2.2"/></svg>
<svg style="left:897px;top:961px;" width="18" height="11" viewBox="0 0 18 11"><path d="M1.5 1.5L9 9L16.5 1.5" fill="none" stroke="#cccccc" stroke-width="1.8"/></svg>
<svg style="left:937px;top:953px;" width="27" height="27" viewBox="0 0 27 27"><g fill="none" stroke="#cccccc" stroke-width="2"><rect x="1" y="1" width="25" height="25" rx="2"/><path d="M13.5 1V26"/></g></svg>
<svg style="left:986px;top:953px;" width="24" height="29" viewBox="0 0 24 29"><g fill="none" stroke="#cccccc" stroke-width="2"><path d="M1 5H23M8 5V1.5H16V5M3.5 5L5 27.5H19L20.5 5M9 10V23M12 10V23M15 10V23"/></g></svg>
<div class="a" style="left:1033px;top:965px;width:4px;height:4px;border-radius:50%;background:#cccccc"></div>
<div class="a" style="left:1044px;top:965px;width:4px;height:4px;border-radius:50%;background:#cccccc"></div>
<div class="a" style="left:1055px;top:965px;width:4px;height:4px;border-radius:50%;background:#cccccc"></div>
<div class="a" style="left:1086px;top:966px;width:22px;height:2px;background:#cccccc;"></div>
<svg style="left:1138px;top:955px;" width="23" height="23" viewBox="0 0 23 23"><g fill="none" stroke="#cccccc" stroke-width="2"><rect x="1" y="6" width="16" height="16"/><path d="M6 6V1H22V17H17"/></g></svg>
<svg style="left:1191px;top:956px;" width="20" height="20" viewBox="0 0 20 20"><path d="M1.5 1.5L18.5 18.5M18.5 1.5L1.5 18.5" stroke="#cccccc" stroke-width="2"/></svg>
<svg style="left:1242px;top:955px;" width="22" height="22" viewBox="0 0 22 22"><rect x="1" y="1" width="20" height="20" fill="none" stroke="#cccccc" stroke-width="2"/></svg>
<div class="a" style="left:1206px;top:1000px;width:92px;height:556px;background:#131313;"></div>
<div class="a" style="left:1206px;top:1000px;width:2px;height:556px;background:#242424;"></div>
<div class="a" style="left:1206px;top:1000px;width:92px;height:2px;background:#242424;"></div>
<div class="a" style="left:1208px;top:1046px;width:90px;height:44px;background:#26272b;"></div>
<div class="a" style="left:1208px;top:1046px;width:2px;height:44px;background:#2d4a63;"></div>
<svg style="left:1240px;top:1009px;" width="28" height="28" viewBox="0 0 28 28"><g fill="none" stroke="#cccccc" stroke-width="2"><rect x="1" y="1" width="26" height="26" rx="3"/><path d="M6 8L12 14L6 20M14 21H21"/></g></svg>
<svg style="left:1240px;top:1053px;" width="28" height="28" viewBox="0 0 28 28"><g fill="none" stroke="#cccccc" stroke-width="2"><rect x="1" y="1" width="26" height="26" rx="3"/><path d="M6 8L12 14L6 20M14 21H21"/></g></svg>
<div class="t mono" style="left:137.4px;top:1022.5px;line-height:28px;font-size:23.33px"><span style="color:#23d18b;font-weight:bold">julia&gt; </span><span style="color:#cccccc">penguins = DataFrame(PalmerPenguins.load())</span></div>
<div class="t mono" style="left:137.4px;top:1050.5px;line-height:28px;font-size:23.33px"><span style="color:#cccccc">       ggplot(penguins) +</span></div>
<div class="t mono" style="left:137.4px;top:1078.5px;line-height:28px;font-size:23.33px"><span style="color:#cccccc">         geom_point(@aes(x = flipper_length_mm, y = bill_length_mm, color</span></div>
<div class="t mono" style="left:137.4px;top:1106.5px;line-height:28px;font-size:23.33px"><span style="color:#cccccc">= species)) +</span></div>
<div class="t mono" style="left:137.4px;top:1134.5px;line-height:28px;font-size:23.33px"><span style="color:#cccccc">         scale_color_manual(values=["#FF8C00", "#A020F0", "#008B8B"]) + <svg style="position:relative;display:inline-block;vertical-align:top" width="14" height="28"><g fill="#cccccc"><rect x="0.5" y="10.5" width="3" height="3"/><rect x="5.5" y="10.5" width="3" height="3"/><rect x="10.5" y="10.5" width="3" height="3"/></g></svg></span></div>
<div class="t mono" style="left:137.4px;top:1166px;line-height:28px;font-size:23.33px"><span style="color:#29b8db"><svg style="position:relative;display:inline-block;vertical-align:top" width="14" height="28"><rect x="5.6" y="0" width="2.4" height="28" fill="#29b8db"/></svg></span><span style="color:#cccccc;font-weight:bold">    344×7 DataFrame</span></div>
<div class="t mono" style="left:137.4px;top:1194px;line-height:28px;font-size:23.33px"><span style="color:#29b8db"><svg style="position:relative;display:inline-block;vertical-align:top" width="14" height="28"><rect x="5.6" y="0" width="2.4" height="28" fill="#29b8db"/></svg></span><span style="color:#cccccc;font-weight:bold">     Row <svg style="position:relative;display:inline-block;vertical-align:top" width="14" height="28"><rect x="5.6" y="0" width="2.4" height="28" fill="#cccccc"/></svg> species   island     bill_length_mm  bill_depth_mm  flipper_le</span></div>
<div class="t mono" style="left:137.4px;top:1222px;line-height:28px;font-size:23.33px"><span style="color:#cccccc"> <svg style="position:relative;display:inline-block;vertical-align:top" width="14" height="28"><g fill="#cccccc"><rect x="0.5" y="10.5" width="3" height="3"/><rect x="5.5" y="10.5" width="3" height="3"/><rect x="10.5" y="10.5" width="3" height="3"/></g></svg></span></div>
<div class="t mono" style="left:137.4px;top:1250px;line-height:28px;font-size:23.33px"><span style="color:#29b8db"><svg style="position:relative;display:inline-block;vertical-align:top" width="14" height="28"><rect x="5.6" y="0" width="2.4" height="28" fill="#29b8db"/></svg></span><span style="color:#cccccc">         <svg style="position:relative;display:inline-block;vertical-align:top" width="14" height="28"><rect x="5.6" y="0" width="2.4" height="28" fill="#cccccc"/></svg> </span><span style="color:#8a8a8a">String15  String15   Float64?        Float64?       Int64?</span></div>
<div class="t mono" style="left:137.4px;top:1278px;line-height:28px;font-size:23.33px"><span style="color:#cccccc"> <svg style="position:relative;display:inline-block;vertical-align:top" width="14" height="28"><g fill="#cccccc"><rect x="0.5" y="10.5" width="3" height="3"/><rect x="5.5" y="10.5" width="3" height="3"/><rect x="10.5" y="10.5" width="3" height="3"/></g></svg></span></div>
<div class="t mono" style="left:137.4px;top:1306px;line-height:28px;font-size:23.33px"><span style="color:#29b8db"><svg style="position:relative;display:inline-block;vertical-align:top" width="14" height="28"><rect x="5.6" y="0" width="2.4" height="28" fill="#29b8db"/></svg></span><span style="color:#cccccc">      <svg style="position:relative;display:inline-block;vertical-align:top" width="14" height="28"><g fill="#cccccc"><circle cx="3.2" cy="8.5" r="1.6"/><circle cx="3.2" cy="15.5" r="1.6"/><circle cx="3.2" cy="22.5" r="1.6"/></g></svg>  <svg style="position:relative;display:inline-block;vertical-align:top" width="14" height="28"><rect x="5.6" y="0" width="2.4" height="28" fill="#cccccc"/></svg>    <svg style="position:relative;display:inline-block;vertical-align:top" width="14" height="28"><g fill="#cccccc"><circle cx="3.2" cy="8.5" r="1.6"/><circle cx="3.2" cy="15.5" r="1.6"/><circle cx="3.2" cy="22.5" r="1.6"/></g></svg>          <svg style="position:relative;display:inline-block;vertical-align:top" width="14" height="28"><g fill="#cccccc"><circle cx="3.2" cy="8.5" r="1.6"/><circle cx="3.2" cy="15.5" r="1.6"/><circle cx="3.2" cy="22.5" r="1.6"/></g></svg>            <svg style="position:relative;display:inline-block;vertical-align:top" width="14" height="28"><g fill="#cccccc"><circle cx="3.2" cy="8.5" r="1.6"/><circle cx="3.2" cy="15.5" r="1.6"/><circle cx="3.2" cy="22.5" r="1.6"/></g></svg>               <svg style="position:relative;display:inline-block;vertical-align:top" width="14" height="28"><g fill="#cccccc"><circle cx="3.2" cy="8.5" r="1.6"/><circle cx="3.2" cy="15.5" r="1.6"/><circle cx="3.2" cy="22.5" r="1.6"/></g></svg>                <svg style="position:relative;display:inline-block;vertical-align:top" width="14" height="28"><g fill="#cccccc"><circle cx="3.2" cy="8.5" r="1.6"/><circle cx="3.2" cy="15.5" r="1.6"/><circle cx="3.2" cy="22.5" r="1.6"/></g></svg></span></div>
<div class="t mono" style="left:137.4px;top:1334px;line-height:28px;font-size:23.33px"><span style="color:#cccccc"> <svg style="position:relative;display:inline-block;vertical-align:top" width="14" height="28"><g fill="#cccccc"><circle cx="3" cy="11" r="1.5"/><circle cx="8.5" cy="17.5" r="1.5"/><circle cx="14" cy="24" r="1.5"/></g></svg></span></div>
<div class="t mono" style="left:137.4px;top:1362px;line-height:28px;font-size:23.33px"><span style="color:#29b8db"><svg style="position:relative;display:inline-block;vertical-align:top" width="14" height="28"><rect x="5.6" y="0" width="2.4" height="28" fill="#29b8db"/></svg></span><span style="color:#29b8db">                                             3 columns and 344 rows omitt</span></div>
<div class="t mono" style="left:137.4px;top:1390px;line-height:28px;font-size:23.33px"><span style="color:#29b8db">ed</span></div>
<div class="t mono" style="left:137.4px;top:1418px;line-height:28px;font-size:23.33px"><span style="color:#29b8db"><svg style="position:relative;display:inline-block;vertical-align:top" width="14" height="28"><rect x="5.6" y="0" width="2.4" height="28" fill="#29b8db"/></svg></span><span style="color:#cccccc">   ylabel = "Bill length (mm)"</span></div>
<div class="t mono" style="left:137.4px;top:1446px;line-height:28px;font-size:23.33px"><span style="color:#29b8db"><svg style="position:relative;display:inline-block;vertical-align:top" width="14" height="28"><rect x="5.6" y="0" width="2.4" height="28" fill="#29b8db"/></svg></span><span style="color:#cccccc">   xlabel = "Flipper length (mm)"</span></div>
<div class="t mono" style="left:137.4px;top:1474px;line-height:28px;font-size:23.33px"><span style="color:#29b8db"><svg style="position:relative;display:inline-block;vertical-align:top" width="14" height="28"><path d="M6.8 0V15H14" fill="none" stroke="#29b8db" stroke-width="2.4"/></svg></span><span style="color:#cccccc">   geom_point = 3-element Vector{Pair}: <svg style="position:relative;display:inline-block;vertical-align:top" width="14" height="28"><g fill="#cccccc"><rect x="0.5" y="10.5" width="3" height="3"/><rect x="5.5" y="10.5" width="3" height="3"/><rect x="10.5" y="10.5" width="3" height="3"/></g></svg></span></div>
<div class="t mono" style="left:137.4px;top:1529px;line-height:28px;font-size:23.33px"><span style="color:#23d18b;font-weight:bold">julia&gt; </span></div>
<div class="a" style="left:97px;top:1161px;width:1078px;height:6px;background:linear-gradient(#000000a0,#00000000)"></div>
<div class="a" style="left:110px;top:1534px;width:16px;height:16px;border-radius:50%;border:2.5px solid #5a5a5a"></div>
<div class="a" style="left:234px;top:1528px;width:14px;height:28px;border:2px solid #2a3f55"></div>
<div class="a" style="left:1178px;top:1002px;width:28px;height:554px;background:#131313;"></div>
<div class="a" style="left:1178px;top:1024px;width:1.5px;height:532px;background:#0a0a0a;"></div>
<div class="a" style="left:1178px;top:1024px;width:28px;height:1.5px;background:#0a0a0a;"></div>
<div class="a" style="left:1179px;top:1024px;width:9px;height:7px;background:#1f73a0;"></div>
<div class="a" style="left:1179px;top:1042px;width:9px;height:14px;background:#1f73a0;"></div>
<div class="a" style="left:1179px;top:1292px;width:9px;height:14px;background:#1f73a0;"></div>
<div class="a" style="left:1179px;top:1541px;width:9px;height:15px;background:#4a4a4a;"></div>
<div class="a" style="left:0;top:0;width:2400px;height:1600px;border-radius:18px;box-shadow:inset 0 1.5px 0 #4c4c4c, inset 0 0 0 1px #2a2a2a;pointer-events:none"></div>
</div>
</body></html>
